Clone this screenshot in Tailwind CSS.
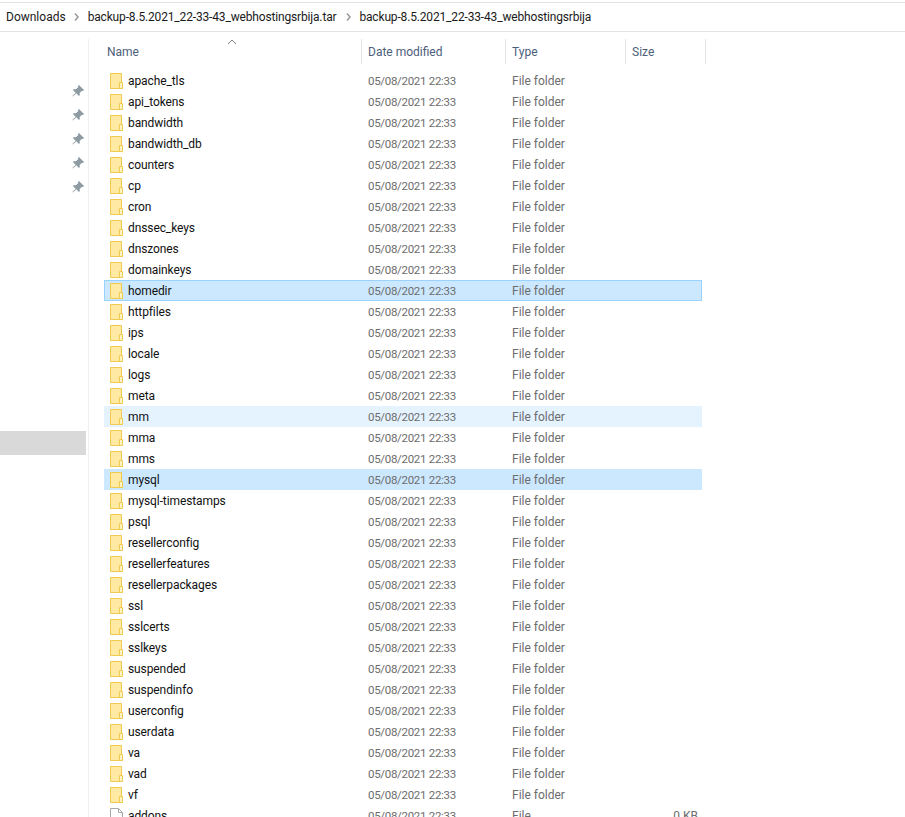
<!DOCTYPE html>
<html lang="en">
<head>
<meta charset="UTF-8" />
<title>backup-8.5.2021_22-33-43_webhostingsrbija</title>
<script src="https://cdn.jsdelivr.net/npm/@tailwindcss/browser@4"></script>
</head>
<body class="bg-white h-[817px] overflow-hidden font-['Roboto','Noto_Sans',sans-serif] text-[12px]">

  <!-- address bar -->
  <div class="mt-[2px] h-[30px] border-y border-[#e3e3e3] flex items-center pl-[6px] text-[#1a1a1a]">
    <span>Downloads</span>
    <svg class="w-[5px] h-[8px] ml-[8px] mr-[9px]" viewBox="0 0 5 8" fill="none" stroke="#9a9a9a" stroke-width="1.5"><path d="M1 .5 4 4 1 7.5"/></svg>
    <span class="tracking-[-0.16px]">backup-8.5.2021_22-33-43_webhostingsrbija.tar</span>
    <svg class="w-[5px] h-[8px] ml-[10px] mr-[8px]" viewBox="0 0 5 8" fill="none" stroke="#9a9a9a" stroke-width="1.5"><path d="M1 .5 4 4 1 7.5"/></svg>
    <span class="tracking-[-0.16px]">backup-8.5.2021_22-33-43_webhostingsrbija</span>
  </div>

  <div class="flex mt-[7px]">
    <!-- nav pane -->
    <div class="w-[89px] h-[778px] shrink-0 border-r border-[#f0f0f0] pt-[40px]">
      <div id="pins"></div>
      <div class="h-[232px]"></div>
      <div class="h-[24px] w-[86px] bg-[#d9d9d9]"></div>
    </div>

    <!-- file list -->
    <div class="relative flex-1 min-w-0">
      <svg class="absolute left-[138px] top-[0px] w-[10px] h-[6px]" viewBox="0 0 10 6" fill="none" stroke="#808080"><path d="M1 5 5 1l4 4"/></svg>
      <div class="flex h-[25px] ml-[15px] items-center text-[#4c607a]">
        <div class="w-[258px] h-full flex items-center pl-[3px] border-r border-[#e5e5e5]">Name</div>
        <div class="w-[144px] h-full flex items-center pl-[6px] border-r border-[#e5e5e5]">Date modified</div>
        <div class="w-[120px] h-full flex items-center pl-[6px] border-r border-[#e5e5e5]">Type</div>
        <div class="w-[80px] h-full flex items-center pl-[6px] border-r border-[#e5e5e5]">Size</div>
      </div>
      <div id="rows" class="mt-[6px] ml-[15px] w-[598px]"></div>
    </div>
  </div>

<script>
  var names = ['apache_tls','api_tokens','bandwidth','bandwidth_db','counters','cp','cron','dnssec_keys','dnszones','domainkeys','homedir','httpfiles','ips','locale','logs','meta','mm','mma','mms','mysql','mysql-timestamps','psql','resellerconfig','resellerfeatures','resellerpackages','ssl','sslcerts','sslkeys','suspended','suspendinfo','userconfig','userdata','va','vad','vf'];
  var rowStyles = {
    homedir: 'bg-[#cce8ff] border-[#99d1ff]',
    mm: 'bg-[#e5f3ff] border-[#e5f3ff]',
    mysql: 'bg-[#cce8ff] border-[#cce8ff]'
  };
  var folder = '<svg class="w-[13px] h-[16px] shrink-0" viewBox="0 0 13 16"><path d="M.5.5h11v15H.5z" fill="#ffe9a3" stroke="#f0c94f"/><path d="M9.5 15.5v-6h3v6z" fill="#fff3c4" stroke="#f0c94f"/></svg>';
  var file = '<svg class="w-[13px] h-[16px] shrink-0" viewBox="0 0 13 16"><path d="M.5.5h8l4 4v11H.5z" fill="#fff" stroke="#a8a8a8"/><path d="M8.5.5v4h4" fill="none" stroke="#a8a8a8"/></svg>';

  function row(name, icon, type, size) {
    return '<div class="flex items-center h-[21px] pl-[5px] border ' + (rowStyles[name] || 'border-transparent') + '">' +
      icon +
      '<span class="w-[245px] pl-[5px] text-[#111] tracking-[-0.1px]">' + name + '</span>' +
      '<span class="w-[144px] text-[#6d6d6d] text-[11.5px] leading-[18px] tracking-[-0.3px]">05/08/2021 22:33</span>' +
      '<span class="w-[120px] text-[#6d6d6d]">' + type + '</span>' +
      '<span class="w-[66px] text-right text-[#6d6d6d]">' + size + '</span>' +
    '</div>';
  }
  document.getElementById('rows').innerHTML =
    names.map(function (n) { return row(n, folder, 'File folder', ''); }).join('') +
    row('addons', file, 'File', '0 KB');

  var pin = '<div class="h-[24px] flex items-center justify-end pr-[4px]"><svg class="w-[12px] h-[12px]" viewBox="0 0 12 12" fill="#8d9ba3"><path d="M7 0l5 5-1 1-1-.3-2.4 2.4.2 2L7 11 4.2 8.2 1 11.5l-.6-.6 3.3-3.2L1 5l.9-.9 2 .2L6.3 1.9 6 1z"/></svg></div>';
  document.getElementById('pins').innerHTML = pin + pin + pin + pin + pin;
</script>
</body>
</html>
